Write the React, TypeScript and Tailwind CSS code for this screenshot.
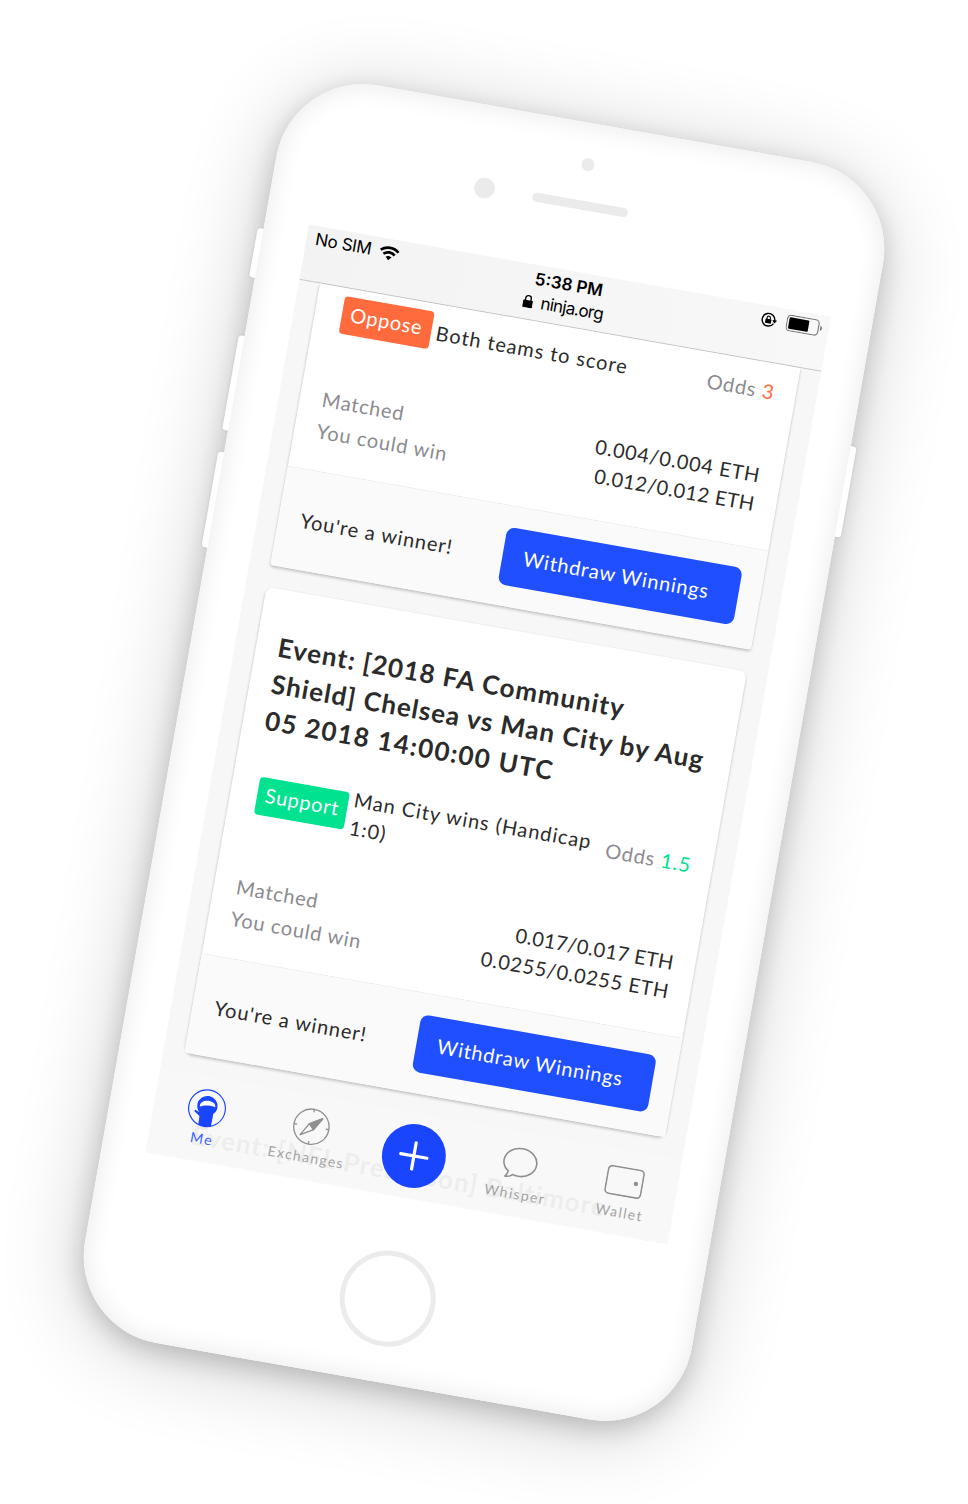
import React from "react";

const lato = "font-['Lato','Noto_Sans',sans-serif]";
const inter = "font-['Inter','Liberation_Sans',sans-serif]";

function StatusBar() {
  return (
    <header className={`flex h-[56px] shrink-0 justify-between border-b border-[#c9c9c9] bg-gradient-to-r from-[#f3f3f3] to-[#f8f8f8] text-[17px] text-black ${inter}`}>
      <div className="flex h-[29px] w-[200px] items-center gap-[8px] pl-[9px]">
        <span className="tracking-[-0.35px]">No SIM</span>
        <svg width="20" height="15" viewBox="0 0 20 15" fill="none" stroke="#000" strokeWidth="2.7">
          <path d="M1 5.2C6 .6 14 .6 19 5.2" />
          <path d="M4.3 8.7c3.3-3 8.1-3 11.4 0" />
          <path d="M7 11.2c1.8-1.5 4.2-1.5 6 0L10 14.4z" fill="#000" stroke="none" />
        </svg>
      </div>
      <div className="flex flex-col items-center pl-[3px] pt-[2px]">
        <span className="h-[24px] font-semibold leading-[24px]">5:38 PM</span>
        <span className="mr-[4px] flex h-[23px] items-center gap-[8px] leading-[23px] tracking-[-0.7px]">
          <svg width="10" height="13" viewBox="0 0 10 13">
            <rect x="0" y="5.5" width="10" height="7.5" rx="1" />
            <path d="M2.2 6V3.6a2.8 2.8 0 0 1 5.6 0V6" fill="none" stroke="#000" strokeWidth="1.4" />
          </svg>
          ninja.org
        </span>
      </div>
      <div className="flex h-[28px] w-[200px] items-center justify-end gap-[9px] pr-[6px]">
        <svg width="17" height="16" viewBox="0 0 17 16" fill="none" stroke="#000" strokeWidth="1.4">
          <path d="M13.6 10.8A6.3 6.3 0 1 1 14.3 8" />
          <path d="M11.8 7.5h5l-2.5 3z" fill="#000" stroke="none" />
          <rect x="5" y="7.2" width="6" height="4.3" rx=".5" fill="#000" stroke="none" />
          <path d="M6.3 7.5V6a1.7 1.7 0 0 1 3.4 0v1.5" strokeWidth="1.1" />
        </svg>
        <svg width="37" height="17" viewBox="0 0 37 17">
          <rect x=".6" y=".6" width="32" height="15.6" rx="3.6" fill="none" stroke="#777" strokeWidth="1.1" />
          <rect x="2.6" y="2.6" width="20" height="11.6" rx="1" />
          <path d="M34.4 5.8c2.4.8 2.4 4.4 0 5.2z" fill="#777" />
        </svg>
      </div>
    </header>
  );
}

function Amounts({ children }: { children: React.ReactNode }) {
  return (
    <div className="flex h-[88px] justify-between pl-[22.5px] pr-[22px]">
      <div className="text-[20px] leading-[32px] text-[#8b8b90]">
        <p className="tracking-[0.8px]">Matched</p>
        <p className="tracking-[0.8px]">You could win</p>
      </div>
      <div className="pt-[1px] text-right text-[20px] leading-[29.5px] text-[#2b2b2b]">{children}</div>
    </div>
  );
}

function CardFooter() {
  return (
    <div className="flex h-[101px] items-center justify-between rounded-b-[3px] border-t border-[#ebebeb] bg-[#fafafa] pl-[22px] pr-[22px]">
      <span className="text-[20px] tracking-[0.9px] text-[#2b2b2b]">You're a winner!</span>
      <button className="h-[58px] w-[239px] rounded-[8px] bg-[#1f4fff] pb-[2px] pl-[21px] text-left text-[20px] tracking-[0.8px] text-white">
        Withdraw Winnings
      </button>
    </div>
  );
}

const cardShadow = "shadow-[0_2px_3px_rgba(0,0,0,0.2),0_0_2px_rgba(0,0,0,0.08)]";

function OpposeCard() {
  return (
    <article className={`mx-[21px] shrink-0 rounded-b-[3px] bg-white ${cardShadow}`}>
      <div className="flex h-[97px] items-start pl-[26.5px] pr-[22px] pt-[8px] text-[20px] leading-[28px]">
        <span className="h-[38px] w-[91px] rounded-[4px] bg-[#ff6b3d] text-center leading-[34px] tracking-[0.7px] text-white">Oppose</span>
        <span className="ml-[5.5px] mt-[6px] tracking-[1px] text-[#2b2b2b]">Both teams to score</span>
        <span className="-mr-[0.5px] ml-auto mt-[6.5px] tracking-[0.8px] text-[#8b8b90]">
          Odds <span className="text-[#ff6b3d]">3</span>
        </span>
      </div>
      <Amounts>
        <p className="-mr-[0.7px] tracking-[0.8px]">0.004/0.004 ETH</p>
        <p className="-mr-[0.4px] tracking-[0.5px]">0.012/0.012 ETH</p>
      </Amounts>
      <CardFooter />
    </article>
  );
}

function SupportCard() {
  return (
    <article className={`mx-[21px] mt-[22.5px] shrink-0 rounded-[8px] bg-white pt-[38.5px] ${cardShadow}`}>
      <h2 className="whitespace-nowrap pl-[22px] text-[26px] font-bold leading-[37.3px] tracking-[1.07px] text-[#2b2b2b]">
        Event: [2018 FA Community
        <br />
        Shield] Chelsea vs Man City by Aug
        <br />
        <span className="tracking-[1.4px]">05 2018 14:00:00 UTC</span>
      </h2>
      <div className="mt-[29.5px] flex h-[104px] items-start whitespace-nowrap pl-[27px] pr-[22px] text-[20px] leading-[28px]">
        <span className="mt-[8px] h-[38px] w-[91px] rounded-[4px] bg-[#00e28f] text-center leading-[34px] tracking-[0.7px] text-white">Support</span>
        <span className="ml-[5.5px] tracking-[1px] text-[#2b2b2b]">
          Man City wins (Handicap
          <br />
          1:0)
        </span>
        <span className="-mr-[0.5px] ml-auto mt-[6.5px] tracking-[0.85px] text-[#8b8b90]">
          Odds <span className="text-[#00e28f]">1.5</span>
        </span>
      </div>
      <Amounts>
        <p className="-mr-[0.3px] tracking-[0.35px]">0.017/0.017 ETH</p>
        <p className="-mr-[0.7px] tracking-[0.75px]">0.0255/0.0255 ETH</p>
      </Amounts>
      <CardFooter />
    </article>
  );
}

function NavItem({ label, active, children }: { label: string; active?: boolean; children: React.ReactNode }) {
  return (
    <div className={`flex w-[106px] flex-col items-center pt-[12px] ${active ? "text-[#3c60ff]" : "text-[#a3a3a3]"}`}>
      <div className="flex h-[40px] items-center">{children}</div>
      <span className="mt-px text-[14px] leading-[20px] tracking-[1.4px]">{label}</span>
    </div>
  );
}

function BottomNav() {
  return (
    <nav className="absolute inset-x-0 bottom-0 flex h-[86px] bg-[#f8f8f8]/95">
      <NavItem label="Me" active>
        <svg width="40" height="40" viewBox="0 0 40 40" fill="none">
          <circle cx="20" cy="20" r="18.4" stroke="#1a45ff" strokeWidth="1.2" />
          <path d="M20 7.6a10.2 10 0 0 1 10.2 10c0 3-1.3 5.2-3 6.600L27 37.200a18.400 18.400 0 0 1-12.800.2L13.900 29 7.800 24.800l1-1.300 4.500 1.600c-2-1.600-3.500-4.200-3.500-7.500A10.200 10 0 0 1 20 7.600z" fill="#1a45ff" />
          <path d="M12.200 18.600c-.6-8.200 16-8.200 15.600 0-4-2-11.600-2-15.600 0z" fill="#fff" transform="rotate(-7 20 16)" />
        </svg>
      </NavItem>
      <NavItem label="Exchanges">
        <svg width="38" height="38" viewBox="0 0 38 38" fill="none" stroke="#8f8f8f" strokeWidth="1.3">
          <circle cx="19" cy="19" r="17.7" />
          <path d="M19 1.5v3M19 33.500v3M1.500 19h3M33.500 19h3" />
          <path d="M29 9 21.500 21.500 9 29l7.500-12.500z" />
          <path d="M29 9 16.500 16.500l5 5z" fill="#8f8f8f" />
        </svg>
      </NavItem>
      <div className="flex w-[106px] justify-center pt-[11px]">
        <div className="flex size-[64px] items-center justify-center rounded-full bg-[#1a45ff]">
          <svg width="30" height="30" viewBox="0 0 30 30" stroke="#fff" strokeWidth="3.2" strokeLinecap="round">
            <path d="M15 1.600v26.800M1.600 15h26.800" />
          </svg>
        </div>
      </div>
      <NavItem label="Whisper">
        <svg width="36" height="34" viewBox="0 0 36 34" fill="none" stroke="#8f8f8f" strokeWidth="1.6" strokeLinejoin="round">
          <path d="M7.500 26.300C3.500 23.600 1.500 20 1.500 16 1.500 8.300 8.800 2 18 2s16.500 6.300 16.500 14S27.200 30 18 30c-2 0-4-.3-5.700-.8C10.500 31 8 32 5 32c1.500-1.700 2.500-3.700 2.500-5.700z" />
        </svg>
      </NavItem>
      <NavItem label="Wallet">
        <svg width="38" height="30" viewBox="0 0 38 30" fill="none" stroke="#8f8f8f" strokeWidth="1.6">
          <rect x="1" y="1" width="36" height="28" rx="4" />
          <circle cx="30.5" cy="15" r="2.2" fill="#8f8f8f" stroke="none" />
        </svg>
      </NavItem>
    </nav>
  );
}

const sideKey = "absolute w-[12px] rounded-[3px] bg-white shadow-[0_0_3px_rgba(0,0,0,0.12)]";

export default function App() {
  return (
    <div className="flex h-[1504px] w-[968px] items-center justify-center overflow-hidden bg-white">
      <div className={`relative h-[1277px] w-[616px] shrink-0 rotate-[10deg] ${lato}`}>
        <div className="absolute inset-0 rounded-[88px] shadow-[0_8px_26px_rgba(0,0,0,0.19),0_10px_85px_rgba(0,0,0,0.19)]" />
        <div className={`${sideKey} -left-[6px] top-[161px] h-[50px]`} />
        <div className={`${sideKey} -left-[6px] top-[270px] h-[96px]`} />
        <div className={`${sideKey} -left-[6px] top-[388px] h-[97px]`} />
        <div className={`${sideKey} -right-[6px] top-[273px] h-[92px]`} />
        <div className="relative flex h-full w-full flex-col items-center rounded-[88px] bg-white shadow-[inset_0_0_26px_rgba(0,0,0,0.09)]">
          <div className="flex h-[148.6px] shrink-0 flex-col items-center pt-[35px]">
            <span className="size-[13px] rounded-full bg-[#ebebeb]" />
            <div className="mr-px mt-[24px] flex items-center gap-[38px] pr-[59px]">
              <span className="size-[21px] rounded-full bg-[#ebebeb]" />
              <span className="h-[9px] w-[97px] rounded-full bg-[#ebebeb]" />
            </div>
          </div>
          <main className="relative ml-[2px] flex h-[942px] w-[530px] shrink-0 flex-col overflow-hidden bg-[#f7f7f7]">
            <StatusBar />
            <OpposeCard />
            <SupportCard />
            <article className={`mx-[21px] mt-[22.5px] h-[120px] shrink-0 rounded-[8px] bg-white pt-[38.5px] ${cardShadow}`}>
              <h2 className="whitespace-nowrap pl-[22px] text-[26px] font-bold leading-[37.3px] tracking-[1.07px] text-[#2b2b2b]">
                Event: [NFL Preseason] Baltimore
              </h2>
            </article>
            <BottomNav />
          </main>
          <div className="mr-px mt-[54px] size-[96px] shrink-0 rounded-full border-[5px] border-[#ebebeb]" />
        </div>
      </div>
    </div>
  );
}
